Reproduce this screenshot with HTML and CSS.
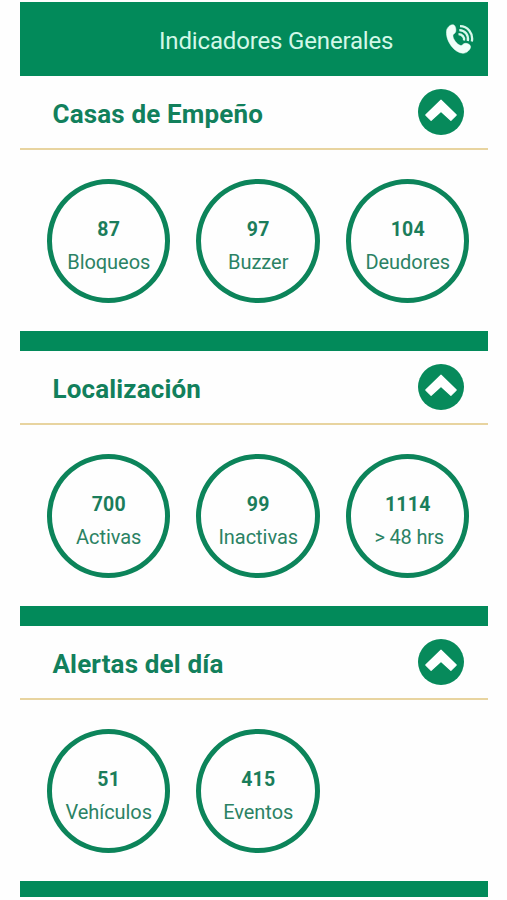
FILE: index.html
```html
<!DOCTYPE html>
<html lang="es">
<head>
<meta charset="utf-8">
<title>Indicadores Generales</title>
<link rel="stylesheet" href="styles.css">
</head>
<body>
<svg class="defs" aria-hidden="true">
  <symbol id="chevron" viewBox="0 0 46 46">
    <circle cx="23" cy="23" r="23" fill="#078a5b"/>
    <path d="M23 11.200 38.200 26 32.900 31.300 23 22.200 13.100 31.300 7.800 26Z" fill="#fff" stroke="#fff" stroke-width="1.200" stroke-linejoin="round"/>
  </symbol>
</svg>
<main class="app">
  <header class="topbar">
    <h1 class="topbar-title">Indicadores Generales</h1>
    <svg class="phone" viewBox="0 0 28 30" aria-hidden="true">
      <path d="M.8 5.500C2 2.400 5.200.2 7.400.8c2.200.6 2.900 4.400 2.300 7-.4 1.800-2.900 2.100-2.800 4 .3 3.700 3.900 8.400 7.600 9.700 2 .6 2.300-2 4.500-2.200 2.500-.2 5.500 1.400 5.600 3.400.1 2.800-3.900 6.700-7.700 6.600C8 29-1.600 15.500.8 5.500Z" fill="#f0fff9" stroke="#f0fff9" stroke-width=".5"/>
      <g fill="none" stroke="#d8f8eb" stroke-width="2.300">
        <path d="M14 2.200C21.500 2.200 27.600 9.200 25.800 17.500"/>
        <path d="M13.300 6.200C18.800 6.200 23 11 21.800 17"/>
        <path d="M12.500 10.200C16 10.200 18.800 13.200 18 16.600"/>
      </g>
    </svg>
  </header>

  <section class="panel">
    <div class="panel-head"><h2>Casas de Empeño</h2><svg class="toggle"><use href="#chevron"/></svg></div>
    <div class="rings">
      <div class="ring"><b>87</b><span>Bloqueos</span></div>
      <div class="ring"><b>97</b><span>Buzzer</span></div>
      <div class="ring"><b>104</b><span>Deudores</span></div>
    </div>
  </section>

  <section class="panel">
    <div class="panel-head"><h2>Localización</h2><svg class="toggle"><use href="#chevron"/></svg></div>
    <div class="rings">
      <div class="ring"><b>700</b><span>Activas</span></div>
      <div class="ring"><b>99</b><span>Inactivas</span></div>
      <div class="ring"><b>1114</b><span class="hours">&gt; 48 hrs</span></div>
    </div>
  </section>

  <section class="panel panel-last">
    <div class="panel-head"><h2>Alertas del día</h2><svg class="toggle"><use href="#chevron"/></svg></div>
    <div class="rings">
      <div class="ring"><b>51</b><span>Vehículos</span></div>
      <div class="ring"><b>415</b><span>Eventos</span></div>
    </div>
  </section>
</main>
</body>
</html>
```
FILE: styles.css
```css
* { box-sizing: border-box; }
body {
  margin: 0;
  background: #fefefe;
  font-family: Roboto, "Liberation Sans", sans-serif;
  color: #12805c;
}
.defs { display: block; width: 0; height: 0; }
.app { width: 468px; margin-left: 19.5px; padding-top: 2px; }
.topbar {
  height: 74px;
  display: flex;
  align-items: center;
  justify-content: space-between;
  padding: 0 14px 0 139.5px;
  background: #028a5a;
}
.topbar-title {
  margin: 4px 0 0;
  font-size: 24px;
  line-height: 28px;
  font-weight: 400;
  letter-spacing: -.16px;
  color: #d2f8e8;
  white-space: nowrap;
}
.phone { width: 28px; height: 30px; }
.panel {
  height: 275px;
  border-bottom: 20px solid #028a5a;
}
.panel-last { height: 271px; border-bottom-width: 16px; }
.panel-head {
  height: 74px;
  display: flex;
  align-items: center;
  justify-content: space-between;
  padding: 0 23.5px 0 33px;
  border-bottom: 2px solid #e8d4a0;
}
.panel-head h2 {
  margin: 3px 0 0;
  font-size: 26px;
  line-height: 30px;
  font-weight: 700;
  letter-spacing: .15px;
}
.toggle { width: 46px; height: 46px; }
.rings { display: flex; gap: 26px; padding: 29px 0 0 27px; }
.ring {
  width: 123.5px;
  height: 124px;
  border: 5px solid #0c845a;
  border-radius: 50%;
  display: flex;
  flex-direction: column;
  align-items: center;
  padding: 34px 0 0 1px;
  color: #2b8264;
}
.ring b {
  font-size: 19.5px;
  line-height: 24px;
  font-weight: 700;
  letter-spacing: .2px;
  color: #1b7d5b;
}
.ring span { margin-top: 8px; font-size: 20px; line-height: 24px; letter-spacing: -.05px; white-space: nowrap; }
.ring .hours { padding-left: 3px; letter-spacing: -.2px; }
```
